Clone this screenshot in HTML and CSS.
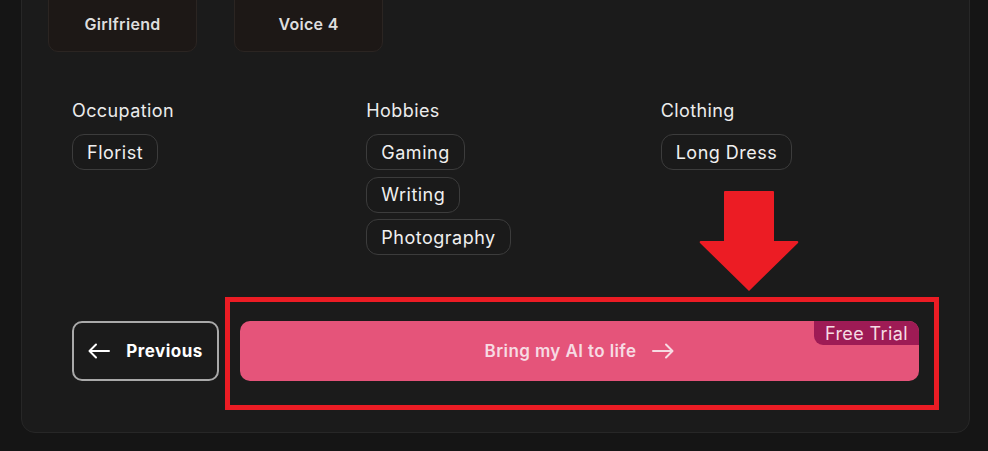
FILE: index.html
```html
<!DOCTYPE html>
<html lang="en">
<head>
<meta charset="utf-8">
<title>Create AI</title>
<link rel="stylesheet" href="styles.css">
</head>
<body>
<div class="card">
  <div class="tiles">
    <div class="tile">Girlfriend</div>
    <div class="tile">Voice 4</div>
  </div>
  <div class="traits">
    <div class="trait">
      <div class="label">Occupation</div>
      <div class="chips">
        <span class="chip">Florist</span>
      </div>
    </div>
    <div class="trait">
      <div class="label">Hobbies</div>
      <div class="chips">
        <span class="chip">Gaming</span>
        <span class="chip">Writing</span>
        <span class="chip">Photography</span>
      </div>
    </div>
    <div class="trait">
      <div class="label">Clothing</div>
      <div class="chips">
        <span class="chip">Long Dress</span>
      </div>
    </div>
  </div>
  <div class="actions">
    <button class="btn-prev">
      <svg width="22" height="16" viewBox="0 0 22 16" fill="none" stroke="#fff" stroke-width="2" stroke-linecap="round" stroke-linejoin="round"><path d="M21 8H2M8 1.5L1.5 8 8 14.5"/></svg>
      <span>Previous</span>
    </button>
    <button class="btn-go">
      <span>Bring my AI to life</span>
      <svg width="22" height="16" viewBox="0 0 22 16" fill="none" stroke="#f7dbe3" stroke-width="2" stroke-linecap="round" stroke-linejoin="round"><path d="M1 8H20M14 1.5L20.5 8 14 14.5"/></svg>
      <span class="badge">Free Trial</span>
    </button>
  </div>
</div>
<div class="highlight"></div>
<svg class="pointer" width="100" height="101" viewBox="0 0 100 101"><path d="M25 1Q25 0 26 0H74Q75 0 75 1V50H98Q100 50 99 52L50 100L1 52Q0 50 2 50H25Z" fill="#ec1c24"/></svg>
</body>
</html>
```
FILE: styles.css
```css
* { box-sizing: border-box; }
html, body { margin: 0; padding: 0; }
body {
  background: #151515;
  font-family: "Inter", "Open Sans", sans-serif;
  color: #eeeeee;
  width: 988px;
  height: 451px;
  overflow: hidden;
  position: relative;
}
.card {
  margin: -60px 0 0 21px;
  width: 949px;
  background: #1b1b1b;
  border: 1px solid #272727;
  border-radius: 14px;
  padding: 0 50px 51px 26px;
}
.tiles {
  display: flex;
  gap: 37px;
}
.tile {
  width: 149px;
  height: 111px;
  background: #1d1816;
  border: 1px solid #2b2522;
  border-radius: 10px;
  display: flex;
  align-items: flex-end;
  justify-content: center;
  padding-bottom: 17px;
  font-size: 16px;
  font-weight: 600;
  letter-spacing: 0.3px;
  color: #dedede;
}
.traits {
  margin: 46px 0 0 24px;
  display: grid;
  grid-template-columns: 1fr 1fr 1fr;
  column-gap: 36px;
}
.label {
  font-size: 18px;
  line-height: 26px;
  letter-spacing: 0.4px;
  color: #ececec;
}
.chips {
  margin-top: 10px;
  display: flex;
  flex-direction: column;
  align-items: flex-start;
  gap: 6.5px;
}
.chip {
  height: 36px;
  display: inline-flex;
  align-items: center;
  padding: 0 14px;
  border: 1px solid #3c3c3c;
  border-radius: 12px;
  font-size: 18px;
  letter-spacing: 0.5px;
  color: #f0f0f0;
  background: #1a1a1a;
}
.actions {
  margin: 66px 0 0 24px;
  display: flex;
  gap: 21px;
}
button { font-family: inherit; cursor: pointer; }
.btn-prev {
  width: 147px;
  height: 60px;
  background: #1b1b1b;
  border: 2px solid #a9a9a9;
  border-radius: 10px;
  color: #fff;
  font-size: 17px;
  font-weight: 700;
  letter-spacing: 0.5px;
  display: flex;
  align-items: center;
  justify-content: center;
  gap: 16px;
  padding: 0;
}
.btn-go {
  flex: 1;
  height: 60px;
  background: #e5547a;
  border: none;
  border-radius: 10px;
  color: #f7dbe3;
  font-size: 17px;
  font-weight: 600;
  letter-spacing: 0.4px;
  display: flex;
  align-items: center;
  justify-content: center;
  gap: 16px;
  position: relative;
  overflow: hidden;
}
.badge {
  position: absolute;
  top: 0;
  right: 0;
  width: 105px;
  height: 24px;
  background: #9e1b55;
  border-bottom-left-radius: 9px;
  color: #f5dbe4;
  font-size: 18px;
  font-weight: 400;
  letter-spacing: 0.4px;
  display: flex;
  align-items: center;
  justify-content: center;
}
.highlight {
  position: absolute;
  left: 225px;
  top: 297px;
  width: 714px;
  height: 113px;
  border: 5px solid #ec1c24;
}
.pointer {
  position: absolute;
  left: 699px;
  top: 191px;
}
```
